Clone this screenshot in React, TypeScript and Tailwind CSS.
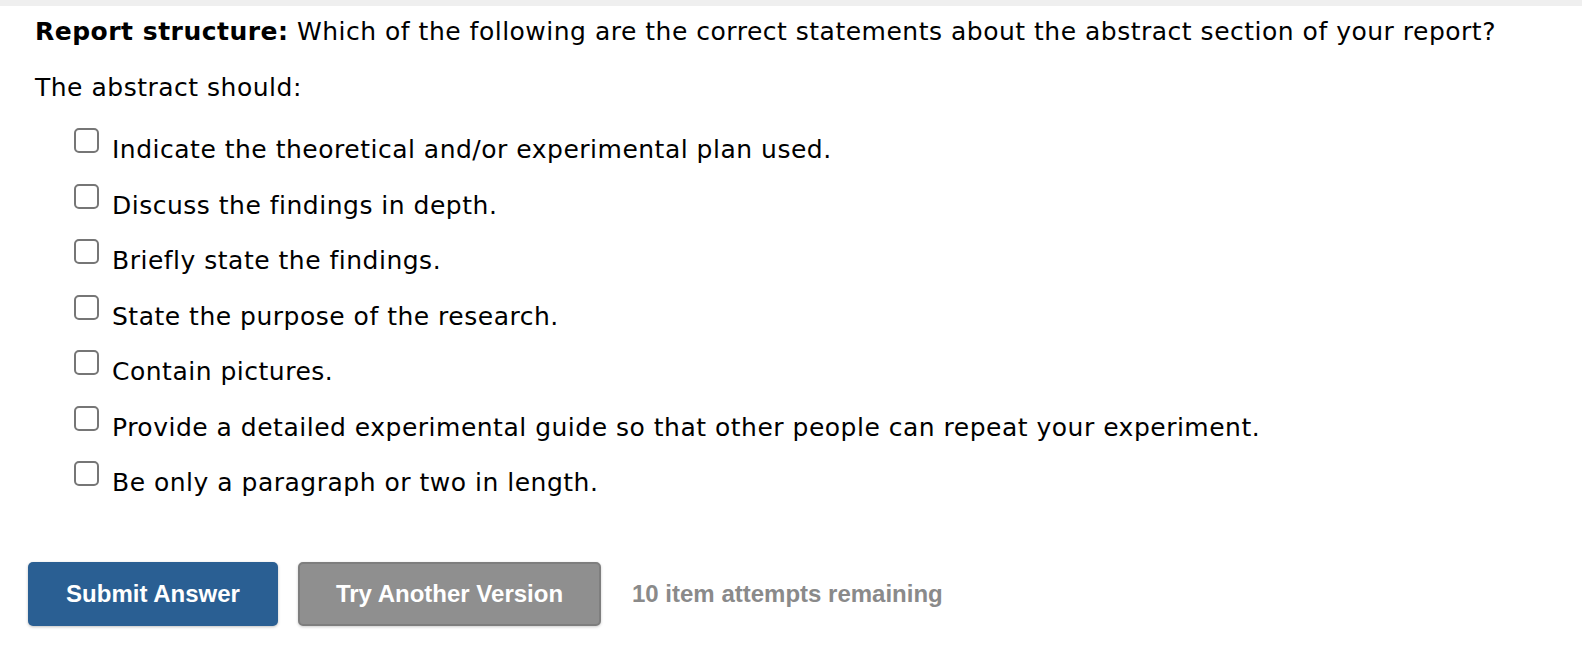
const options = [
  'Indicate the theoretical and/or experimental plan used.',
  'Discuss the findings in depth.',
  'Briefly state the findings.',
  'State the purpose of the research.',
  'Contain pictures.',
  'Provide a detailed experimental guide so that other people can repeat your experiment.',
  'Be only a paragraph or two in length.',
];

export default function App() {
  return (
    <div className="min-h-[667px] w-[1582px] bg-white text-black">
      <div className="h-[6px] bg-[#efefef]" />
      <div className="pl-[35px] font-['DejaVu_Sans',Verdana,sans-serif] text-[25px] tracking-[0.5px]">
        <p className="mt-[1px] flex h-[50px] items-center">
          <span>
            <b>Report structure:</b> Which of the following are the correct statements about the abstract section of
            your report?
          </span>
        </p>
        <p className="mt-[6px] flex h-[50px] items-center">The abstract should:</p>

        <ul className="mt-[7px] pl-[39px]">
          {options.map((text) => (
            <li key={text} className="flex h-[55.5px] items-center">
              <span className="mb-[14px] h-[25px] w-[25px] shrink-0 rounded-[5px] border-2 border-[#767676] bg-white" />
              <span className="ml-[13px] mt-[4px]">{text}</span>
            </li>
          ))}
        </ul>
      </div>

      <div className="mt-[53px] flex items-center pl-[28px] font-['Liberation_Sans',Arial,sans-serif] text-[24px] font-bold">
        <button className="h-[64px] w-[250px] rounded-[5px] bg-[#2a5f93] text-white shadow-[0_1px_3px_rgba(0,0,0,0.25)]">
          Submit Answer
        </button>
        <button className="ml-[20px] h-[64px] w-[303px] rounded-[5px] border-2 border-[#7e7e7e] bg-[#8f8f8f] text-white shadow-[0_1px_3px_rgba(0,0,0,0.2)]">
          Try Another Version
        </button>
        <span className="ml-[31px] text-[#8a8a8a]">10 item attempts remaining</span>
      </div>
    </div>
  );
}
